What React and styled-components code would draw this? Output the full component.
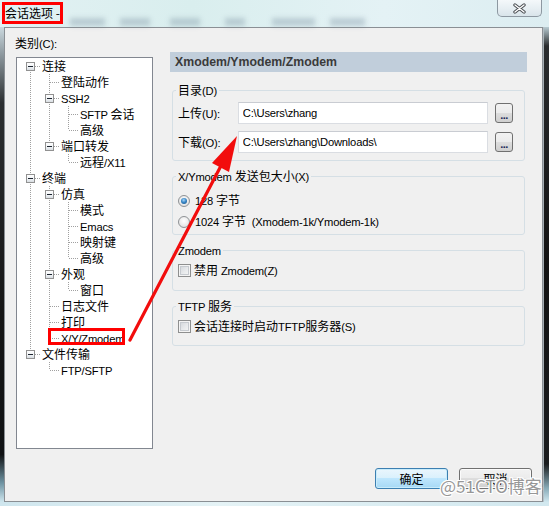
import React from 'react';
import styled, { createGlobalStyle, css } from 'styled-components';

const GlobalStyle = createGlobalStyle`
  html, body {
    margin: 0;
    padding: 0;
  }
  body {
    font-family: "Noto Sans CJK SC", "Liberation Sans", sans-serif;
    font-size: 12px;
    color: #000;
    background: #dcecf0;
  }
`;

const Screen = styled.div`
  position: relative;
  width: 549px;
  height: 506px;
  overflow: hidden;
  display: flex;
  flex-direction: column;
  background: #d8ebf0;
`;

/* latin runs use a narrower face, like the dialog font */
const Lt = styled.span`
  font-family: "Liberation Sans", Arial, sans-serif;
  font-size: 11.2px;
  letter-spacing: -0.2px;
  white-space: pre;
`;

function Mix({ text }) {
  const parts = text.split(/([\u3000-\u9fff\uff00-\uffef]+)/).filter(Boolean);
  return parts.map((p, i) =>
    /[\u3000-\u9fff\uff00-\uffef]/.test(p) ? <span key={i}>{p}</span> : <Lt key={i}>{p}</Lt>
  );
}

/* ---------- title bar ---------- */
const TitleBar = styled.div`
  height: 27px;
  flex: 0 0 27px;
  display: flex;
  align-items: flex-start;
  background: linear-gradient(90deg, #e2f1f3 0%, #d9eeee 35%, #e4f2f5 70%, #dcedf1 100%);
`;

const TitleText = styled.div`
  margin: 2px 0 0 2px;
  width: 61px;
  height: 22px;
  box-sizing: border-box;
  border: 3px solid #ff0000;
  line-height: 16px;
  white-space: nowrap;
  color: #000;
`;

const Blurs = styled.div`
  display: flex;
  margin-top: 18px;
`;

const Blur = styled.span`
  display: block;
  width: ${(p) => p.$w}px;
  height: 8px;
  margin-left: ${(p) => p.$gap}px;
  background: rgba(110, 130, 150, 0.32);
  filter: blur(2.5px);
`;

const CloseBtn = styled.div`
  margin-left: auto;
  margin-right: 7px;
  width: 45px;
  height: 17px;
  box-sizing: border-box;
  border: 1px solid #8d98a1;
  border-top: none;
  border-radius: 0 0 5px 5px;
  background: linear-gradient(180deg, #f4f8fa 0%, #e6eef2 55%, #d9e4ea 100%);
  display: flex;
  align-items: center;
  justify-content: center;
`;

/* ---------- window body ---------- */
const Body = styled.div`
  flex: 1;
  display: flex;
`;

const LeftEdge = styled.div`
  width: 4px;
  background: linear-gradient(
    180deg,
    #cbd9df 0%,
    #8b969c 6%,
    #2c2f31 16%,
    #161616 60%,
    #101214 90%,
    #6f94a3 96%,
    #cfe6ee 100%
  );
`;

const RightEdge = styled.div`
  flex: 1;
  background:
    linear-gradient(90deg, rgba(180, 190, 196, 0.9) 0 1px, transparent 1px),
    linear-gradient(
      180deg,
      #b8cbd2 0%,
      #2a2c2e 4%,
      #121212 50%,
      #1a1c1e 92%,
      #86a9b6 97%,
      #d0e7ef 100%
    );
`;

const BottomStrip = styled.div`
  flex: 0 0 4px;
  background: linear-gradient(90deg, #cfe6ee 0%, #e5f3f6 40%, #d2e8ef 100%);
`;

const Client = styled.div`
  width: 539px;
  box-sizing: border-box;
  border: 1px solid #8a8f94;
  background: #f0f0f0;
  display: flex;
  flex-direction: column;
`;

const Main = styled.div`
  height: 421px;
  display: flex;
`;

const LeftCol = styled.div`
  padding: 7px 0 0 10px;
  display: flex;
  flex-direction: column;
`;

const CatLabel = styled.div`
  line-height: 16px;
  height: 16px;
`;

/* ---------- tree ---------- */
const Tree = styled.div`
  margin: 6px 0 0 1px;
  width: 137px;
  height: 392px;
  box-sizing: border-box;
  border: 1px solid #828790;
  background: #fff;
  padding: 0 0 0 4px;
`;

const TreeRow = styled.div`
  position: relative;
  height: 16px;
  display: flex;
  align-items: center;
  ${(p) =>
    p.$marked &&
    css`
      &::after {
        content: '';
        position: absolute;
        left: 27px;
        top: -2px;
        width: 77px;
        height: 17px;
        box-sizing: border-box;
        border: 3px solid #ff0000;
      }
    `}
`;

const dotsV = 'repeating-linear-gradient(180deg, #a0a0a0 0 1px, transparent 1px 2px)';
const dotsH = 'repeating-linear-gradient(90deg, #a0a0a0 0 1px, transparent 1px 2px)';

const Cell = styled.span`
  position: relative;
  flex: 0 0 19px;
  height: 16px;
  display: flex;
  align-items: center;
  justify-content: center;

  &::before {
    content: '';
    display: ${(p) => (p.$top || p.$bottom ? 'block' : 'none')};
    position: absolute;
    left: 9px;
    width: 1px;
    top: ${(p) => (p.$top ? 0 : 8)}px;
    bottom: ${(p) => (p.$bottom ? 0 : 8)}px;
    background: ${dotsV};
  }

  &::after {
    content: '';
    display: ${(p) => (p.$across ? 'block' : 'none')};
    position: absolute;
    left: 10px;
    right: -1px;
    top: 8px;
    height: 1px;
    background: ${dotsH};
  }
`;

const Expander = styled.span`
  position: relative;
  z-index: 1;
  width: 9px;
  height: 9px;
  margin-top: 1px;
  box-sizing: border-box;
  border: 1px solid #919191;
  background: linear-gradient(180deg, #ffffff 0%, #eef1f4 60%, #d8dde2 100%);
  display: flex;
  align-items: center;
  justify-content: center;

  &::after {
    content: '';
    width: 5px;
    height: 1px;
    background: #1d2530;
  }
`;

const NodeLabel = styled.span`
  margin-left: 2px;
  line-height: 16px;
  white-space: nowrap;
`;

/* ---------- right panel ---------- */
const RightCol = styled.div`
  margin-left: 17px;
  padding-top: 24px;
  width: 357px;
  display: flex;
  flex-direction: column;
`;

const PanelHeader = styled.div`
  height: 20px;
  line-height: 20px;
  padding-left: 5px;
  background: #c1cedb;
  color: #3a3a3a;
  font-family: "Liberation Sans", Arial, sans-serif;
  font-weight: bold;
  font-size: 12.3px;
`;

const Group = styled.fieldset`
  margin: ${(p) => p.$gap}px 2px 0;
  padding: ${(p) => p.$pt}px 11px ${(p) => p.$pb}px 5px;
  border: 1px solid #d5dfe5;
  border-radius: 3px;
  min-width: 0;
  display: flex;
  flex-direction: column;
  gap: ${(p) => p.$rowGap || 0}px;
`;

const Legend = styled.legend`
  padding: 0 2px;
  margin-left: -2px;
  line-height: 16px;
  font-size: 12px;
`;

const PathRow = styled.div`
  display: flex;
  align-items: center;
  height: 22px;
`;

const FieldLabel = styled.span`
  width: 60px;
  line-height: 16px;
`;

const PathInput = styled.input`
  width: 251px;
  height: 22px;
  box-sizing: border-box;
  margin: 0;
  padding: 0 4px;
  border: 1px solid #dadde2;
  border-top-color: #c9ccd2;
  background: #fff;
  font-family: "Liberation Sans", Arial, sans-serif;
  font-size: 11.2px;
  letter-spacing: -0.2px;
  color: #000;
  outline: none;
`;

const BrowseBtn = styled.button`
  margin: 0 0 0 7px;
  width: 18px;
  height: 20px;
  box-sizing: border-box;
  padding: 0 0 2px;
  border: 1px solid #707070;
  border-radius: 3px;
  background: linear-gradient(180deg, #f2f2f2 0%, #ebebeb 50%, #dddddd 50%, #cfcfcf 100%);
  display: flex;
  align-items: flex-end;
  justify-content: center;
  font-family: "Liberation Sans", Arial, sans-serif;
  font-size: 11px;
  font-weight: bold;
  line-height: 10px;
  letter-spacing: -0.5px;
  color: #1a2a55;
`;

const OptionRow = styled.div`
  display: flex;
  align-items: center;
  height: ${(p) => p.$h}px;
  white-space: nowrap;
`;

const OptionText = styled.span`
  line-height: 16px;
  white-space: pre;
`;

const Radio = styled.span`
  position: relative;
  width: 12px;
  height: 12px;
  box-sizing: border-box;
  border-radius: 50%;
  border: 1px solid #8f9295;
  background: radial-gradient(circle at 50% 40%, #ffffff 0%, #f1f1f1 40%, #d7d7d7 100%);
  margin-right: 5px;

  &::after {
    content: '';
    display: ${(p) => (p.$on ? 'block' : 'none')};
    position: absolute;
    left: 2px;
    top: 2px;
    width: 6px;
    height: 6px;
    border-radius: 50%;
    background: radial-gradient(circle at 45% 35%, #a8d6f7 0%, #3a88c8 45%, #134a7c 100%);
  }
`;

const Check = styled.span`
  width: 13px;
  height: 13px;
  box-sizing: border-box;
  border: 1px solid #8e8f8f;
  background: linear-gradient(135deg, #cdd1d6 0%, #e8eaec 55%, #f8f8f8 100%);
  box-shadow: inset 0 0 0 1px #f4f4f4, inset 0 0 0 2px #c6cacf;
  margin: 0 3px 0 0;
`;

/* ---------- footer ---------- */
const Footer = styled.div`
  padding: 19px 10px 12px 0;
  display: flex;
  justify-content: flex-end;
  gap: 11px;
`;

const DialogBtn = styled.button`
  width: 73px;
  height: 21px;
  box-sizing: border-box;
  margin: 0;
  padding: 0;
  border-radius: 3px;
  font-family: inherit;
  font-size: 12px;
  line-height: 19px;
  color: #000;
  border: 1px solid ${(p) => (p.$primary ? '#3c7fb1' : '#707070')};
  background: ${(p) =>
    p.$primary
      ? 'linear-gradient(180deg, #eaf6fd 0%, #d9f0fc 50%, #bee6fd 50%, #a7d9f5 100%)'
      : 'linear-gradient(180deg, #f2f2f2 0%, #ebebeb 50%, #dddddd 50%, #cfcfcf 100%)'};
  box-shadow: ${(p) => (p.$primary ? 'inset 0 0 0 1px #c9ecfb' : 'inset 0 0 0 1px #fbfbfb')};
`;

/* ---------- overlays ---------- */
const Watermark = styled.div`
  position: absolute;
  left: 440px;
  top: 476px;
  font-size: 17px;
  line-height: 20px;
  color: #979797;
  white-space: nowrap;
  text-shadow: 1px 0 0 #fff, -1px 0 0 #fff, 0 1px 0 #fff, 0 -1px 0 #fff,
    1px 1px 0 #fff, -1px -1px 0 #fff, 1px -1px 0 #fff, -1px 1px 0 #fff;
`;

const ArrowLayer = styled.svg`
  position: absolute;
  left: 0;
  top: 0;
  pointer-events: none;
`;

const treeData = [
  { label: '连接', level: 0 },
  { label: '登陆动作', level: 1 },
  { label: 'SSH2', level: 1 },
  { label: 'SFTP 会话', level: 2 },
  { label: '高级', level: 2 },
  { label: '端口转发', level: 1 },
  { label: '远程/X11', level: 2 },
  { label: '终端', level: 0 },
  { label: '仿真', level: 1 },
  { label: '模式', level: 2 },
  { label: 'Emacs', level: 2 },
  { label: '映射键', level: 2 },
  { label: '高级', level: 2 },
  { label: '外观', level: 1 },
  { label: '窗口', level: 2 },
  { label: '日志文件', level: 1 },
  { label: '打印', level: 1 },
  { label: 'X/Y/Zmodem', level: 1, marked: true },
  { label: '文件传输', level: 0 },
  { label: 'FTP/SFTP', level: 1 },
];

function buildRows(items) {
  const cont = [];
  return items.map((item, idx) => {
    let hasNext = false;
    for (let j = idx + 1; j < items.length; j++) {
      if (items[j].level < item.level) break;
      if (items[j].level === item.level) {
        hasNext = true;
        break;
      }
    }
    const open = idx + 1 < items.length && items[idx + 1].level > item.level;
    cont[item.level] = hasNext;
    return { ...item, hasNext, open, first: idx === 0, guides: cont.slice(0, item.level) };
  });
}

const rows = buildRows(treeData);

export default function App() {
  return (
    <Screen>
      <GlobalStyle />
      <TitleBar>
        <TitleText>会话选项 -</TitleText>
        <Blurs>
          <Blur $w={35} $gap={7} />
          <Blur $w={30} $gap={15} />
          <Blur $w={30} $gap={20} />
          <Blur $w={20} $gap={25} />
          <Blur $w={43} $gap={27} />
          <Blur $w={35} $gap={15} />
        </Blurs>
        <CloseBtn>
          <svg width="13" height="11" viewBox="0 0 13 11">
            <path d="M2 2 L11 9 M11 2 L2 9" stroke="#4b4f53" strokeWidth="3.4" strokeLinecap="round" />
            <path d="M2 2 L11 9 M11 2 L2 9" stroke="#ffffff" strokeWidth="1.4" strokeLinecap="round" />
          </svg>
        </CloseBtn>
      </TitleBar>

      <Body>
        <LeftEdge />
        <Client>
          <Main>
            <LeftCol>
              <CatLabel>
                <Mix text="类别(C):" />
              </CatLabel>
              <Tree>
                {rows.map((row, i) => (
                  <TreeRow key={i} $marked={row.marked}>
                    {row.guides.map((g, k) => (
                      <Cell key={k} $top={g} $bottom={g} />
                    ))}
                    <Cell $top={!row.first} $bottom={row.hasNext} $across>
                      {row.open && <Expander />}
                    </Cell>
                    <NodeLabel>
                      <Mix text={row.label} />
                    </NodeLabel>
                  </TreeRow>
                ))}
              </Tree>
            </LeftCol>

            <RightCol>
              <PanelHeader>Xmodem/Ymodem/Zmodem</PanelHeader>

              <Group $gap={10} $pt={3} $pb={7} $rowGap={7}>
                <Legend>
                  <Mix text="目录(D)" />
                </Legend>
                <PathRow>
                  <FieldLabel>
                    <Mix text="上传(U):" />
                  </FieldLabel>
                  <PathInput readOnly value={'C:\\Users\\zhang'} />
                  <BrowseBtn>...</BrowseBtn>
                </PathRow>
                <PathRow>
                  <FieldLabel>
                    <Mix text="下载(O):" />
                  </FieldLabel>
                  <PathInput readOnly value={'C:\\Users\\zhang\\Downloads\\'} />
                  <BrowseBtn>...</BrowseBtn>
                </PathRow>
              </Group>

              <Group $gap={7} $pt={5} $pb={2}>
                <Legend>
                  <Mix text="X/Ymodem 发送包大小(X)" />
                </Legend>
                <OptionRow $h={21}>
                  <Radio $on />
                  <OptionText>
                    <Mix text="128 字节" />
                  </OptionText>
                </OptionRow>
                <OptionRow $h={21}>
                  <Radio />
                  <OptionText>
                    <Mix text="1024 字节  (Xmodem-1k/Ymodem-1k)" />
                  </OptionText>
                </OptionRow>
              </Group>

              <Group $gap={7} $pt={1} $pb={10}>
                <Legend>
                  <Mix text="Zmodem" />
                </Legend>
                <OptionRow $h={20}>
                  <Check />
                  <OptionText>
                    <Mix text="禁用 Zmodem(Z)" />
                  </OptionText>
                </OptionRow>
              </Group>

              <Group $gap={7} $pt={1} $pb={9}>
                <Legend>
                  <Mix text="TFTP 服务" />
                </Legend>
                <OptionRow $h={20}>
                  <Check />
                  <OptionText>
                    <Mix text="会话连接时启动TFTP服务器(S)" />
                  </OptionText>
                </OptionRow>
              </Group>
            </RightCol>
          </Main>

          <Footer>
            <DialogBtn $primary>确定</DialogBtn>
            <DialogBtn>取消</DialogBtn>
          </Footer>
        </Client>
        <RightEdge />
      </Body>
      <BottomStrip />

      <ArrowLayer width="549" height="506" viewBox="0 0 549 506">
        <line x1="130" y1="340" x2="224" y2="160" stroke="#f20d0d" strokeWidth="3.2" strokeLinecap="round" />
        <polygon points="237,136 229,172 212,163" fill="#f20d0d" />
      </ArrowLayer>
      <Watermark>@51CTO博客</Watermark>
    </Screen>
  );
}
